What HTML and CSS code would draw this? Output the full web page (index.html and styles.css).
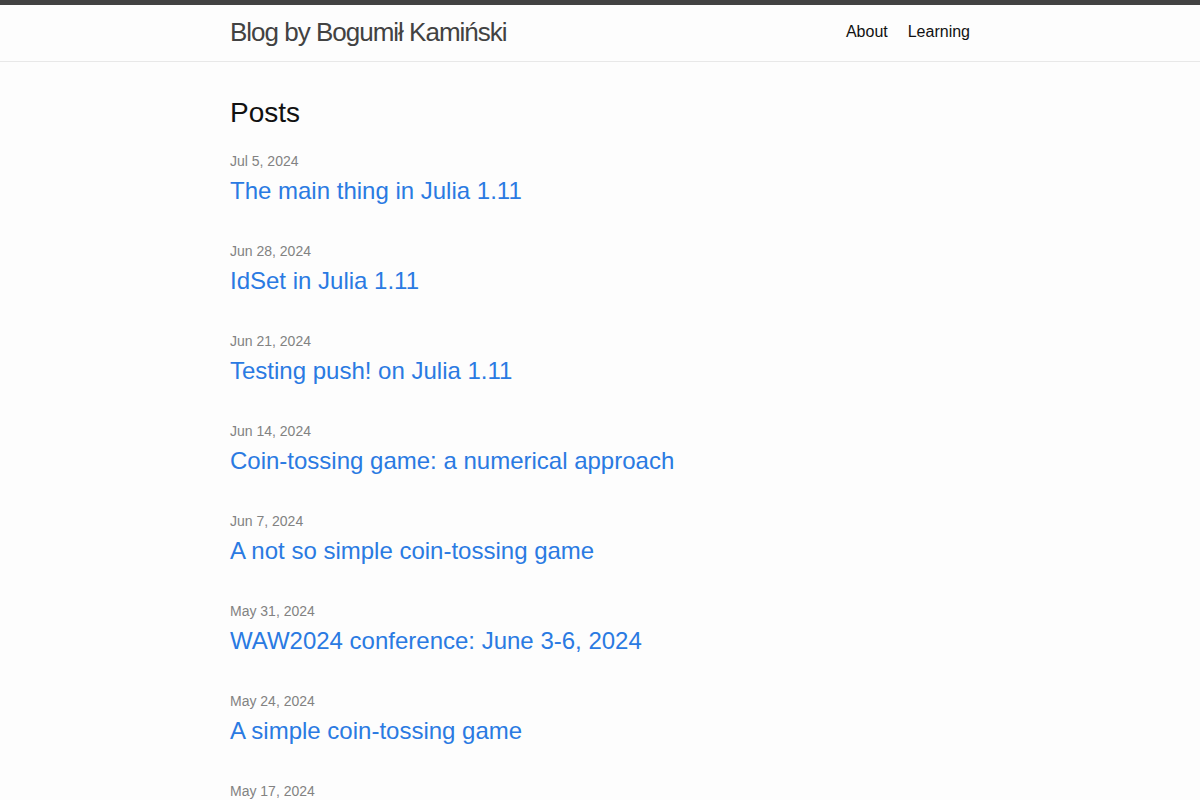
FILE: index.html
```html
<!DOCTYPE html>
<html lang="en">
<head>
    <meta charset="UTF-8">
    <meta name="viewport" content="width=device-width, initial-scale=1.0">
    <title>Blog by Bogumił Kamiński</title>
    <link rel="stylesheet" href="styles.css">
</head>
<body>
<header class="site-header">
    <div class="wrapper header-row">
        <a class="site-title" href="#">Blog by Bogumił Kamiński</a>
        <nav class="site-nav">
            <a class="page-link" href="#">About</a>
            <a class="page-link" href="#">Learning</a>
        </nav>
    </div>
</header>

<main class="page-content">
    <div class="wrapper">
        <h2 class="post-list-heading">Posts</h2>
        <ul class="post-list">
            <li><span class="post-meta">Jul 5, 2024</span>
                <h3><a class="post-link" href="#">The main thing in Julia 1.11</a></h3>
            </li>
            <li><span class="post-meta">Jun 28, 2024</span>
                <h3><a class="post-link" href="#">IdSet in Julia 1.11</a></h3>
            </li>
            <li><span class="post-meta">Jun 21, 2024</span>
                <h3><a class="post-link" href="#">Testing push! on Julia 1.11</a></h3>
            </li>
            <li><span class="post-meta">Jun 14, 2024</span>
                <h3><a class="post-link" href="#">Coin-tossing game: a numerical approach</a></h3>
            </li>
            <li><span class="post-meta">Jun 7, 2024</span>
                <h3><a class="post-link" href="#">A not so simple coin-tossing game</a></h3>
            </li>
            <li><span class="post-meta">May 31, 2024</span>
                <h3><a class="post-link" href="#">WAW2024 conference: June 3-6, 2024</a></h3>
            </li>
            <li><span class="post-meta">May 24, 2024</span>
                <h3><a class="post-link" href="#">A simple coin-tossing game</a></h3>
            </li>
            <li><span class="post-meta">May 17, 2024</span></li>
        </ul>
    </div>
</main>
</body>
</html>
```

FILE: styles.css
```css
body {
    font-family: "Liberation Sans", Arial, sans-serif;
    font-size: 16px;
    line-height: 1.5;
    background-color: #fdfdfd;
    color: #111;
    margin: 0;
    padding: 0;
}
a {
    text-decoration: none;
}
.wrapper {
    max-width: 740px;
    margin: 0 auto;
    padding: 0 30px;
}
.site-header {
    border-top: 5px solid #424242;
    border-bottom: 1px solid #e8e8e8;
    min-height: 56px;
}
.header-row {
    display: flex;
    justify-content: space-between;
    align-items: flex-start;
}
.site-title {
    font-size: 26px;
    font-weight: 300;
    line-height: 54px;
    letter-spacing: -1px;
    color: #424242;
}
.site-nav {
    display: flex;
    gap: 20px;
    line-height: 54px;
}
.page-link {
    color: #111;
}
.page-content {
    padding: 30px 0;
}
.post-list-heading {
    font-size: 28px;
    font-weight: 400;
    line-height: 1.5;
    margin: 0 0 15px;
}
.post-list {
    list-style: none;
    margin: 0;
    padding: 0;
}
.post-list li {
    margin-bottom: 30px;
}
.post-list h3 {
    font-size: 24px;
    font-weight: 400;
    line-height: 1.5;
    margin: 0;
}
.post-meta {
    font-size: 14px;
    color: #828282;
}
.post-link {
    color: #2a7ae2;
}
```
